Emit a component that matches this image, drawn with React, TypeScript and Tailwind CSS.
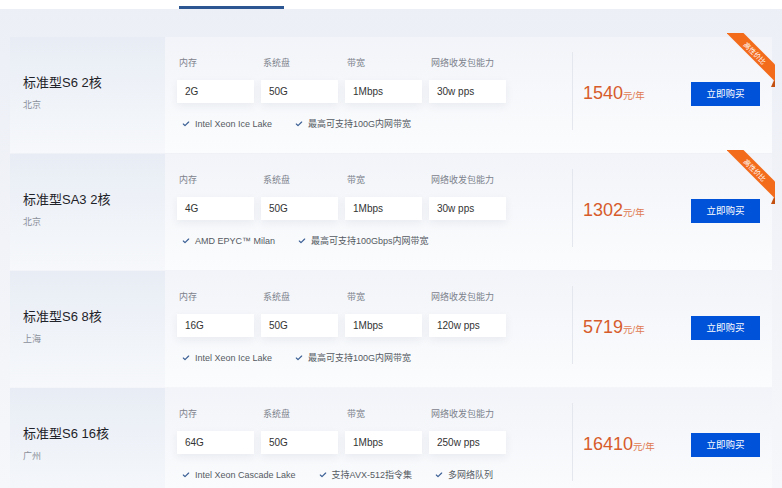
import { Check } from 'lucide-react'

type Plan = {
  name: string
  region: string
  specs: string[]
  features: string[]
  price: string
  hot?: boolean
}

const labels = ['内存', '系统盘', '带宽', '网络收发包能力']

const plans: Plan[] = [
  {
    name: '标准型S6 2核',
    region: '北京',
    specs: ['2G', '50G', '1Mbps', '30w pps'],
    features: ['Intel Xeon Ice Lake', '最高可支持100G内网带宽'],
    price: '1540',
    hot: true,
  },
  {
    name: '标准型SA3 2核',
    region: '北京',
    specs: ['4G', '50G', '1Mbps', '30w pps'],
    features: ['AMD EPYC™ Milan', '最高可支持100Gbps内网带宽'],
    price: '1302',
    hot: true,
  },
  {
    name: '标准型S6 8核',
    region: '上海',
    specs: ['16G', '50G', '1Mbps', '120w pps'],
    features: ['Intel Xeon Ice Lake', '最高可支持100G内网带宽'],
    price: '5719',
  },
  {
    name: '标准型S6 16核',
    region: '广州',
    specs: ['64G', '50G', '1Mbps', '250w pps'],
    features: ['Intel Xeon Cascade Lake', '支持AVX-512指令集', '多网络队列'],
    price: '16410',
  },
]

function Ribbon() {
  return (
    <div className="absolute right-[-3px] top-[-4px] w-[48px] h-[54px] overflow-hidden pointer-events-none">
      {/* folded end */}
      <div className="absolute right-0 bottom-0 w-0 h-0 border-l-[4px] border-l-transparent border-b-[9px] border-b-[#c4500f]" />
      <div className="absolute left-[-8px] top-[14px] w-[72px] h-[12px] rotate-45 bg-[#f36c1c] flex items-center justify-center">
        <span className="text-[7px] leading-none text-white">高性价比</span>
      </div>
    </div>
  )
}

function PlanCard({ plan }: { plan: Plan }) {
  return (
    <div className="relative flex h-[116px] w-[762px] bg-linear-to-b from-[#f2f4f9] to-[#fbfcfd]">
      {/* name + region */}
      <div className="w-[155px] flex flex-col pt-[36px] pl-[13px] bg-linear-to-b from-[#e8edf5] to-[#f6f8fb]">
        <div className="text-[13px] leading-[20px] text-[#1f2329]">{plan.name}</div>
        <div className="mt-[6px] text-[9px] leading-[12px] text-[#8a8f99]">{plan.region}</div>
      </div>

      {/* specs */}
      <div className="w-[407px] pl-[12px] pt-[20px]">
        <div className="flex gap-[7px]">
          {labels.map((l, i) => (
            <div key={l} className="w-[77px]">
              <div className="pl-[2px] text-[9px] leading-[12px] text-[#7d828c]">{l}</div>
              <div className="mt-[11px] h-[23px] flex items-center pl-[8px] bg-white shadow-[0_3px_8px_rgba(40,60,100,0.07)] text-[10px] text-[#333]">
                {plan.specs[i]}
              </div>
            </div>
          ))}
        </div>
        <div className="mt-[15px] pl-[5px] flex items-center gap-[23px]">
          {plan.features.map((f) => (
            <div key={f} className="flex items-center gap-[5px] text-[9px] leading-[12px] text-[#555a63]">
              <Check size={8} strokeWidth={3.5} className="text-[#3b5f95]" />
              <span>{f}</span>
            </div>
          ))}
        </div>
      </div>

      <div className="mt-[15px] h-[78px] w-px bg-[#e4e7ee]" />

      {/* price + buy */}
      <div className="flex-1 flex items-center justify-between pl-[10px] pr-[12px] pb-[2px]">
        <div className="flex items-baseline text-[#d75c2c]">
          <span className="text-[18px] leading-none">{plan.price}</span>
          <span className="text-[9.5px] text-[#e07a52]">元/年</span>
        </div>
        <button className="w-[69px] h-[24px] bg-[#0052d9] text-white text-[9.5px]">立即购买</button>
      </div>

      {plan.hot && <Ribbon />}
    </div>
  )
}

export default function App() {
  return (
    <div className="w-[782px] h-[488px] overflow-hidden bg-linear-to-b from-[#eceff6] to-[#f6f7fa] font-['Liberation_Sans','Noto_Sans_CJK_SC',sans-serif]">
      {/* tab bar bottom */}
      <div className="h-[9px] bg-white pl-[179px] pt-[6px]">
        <div className="w-[105px] h-[3px] bg-[#2c5692]" />
      </div>

      <div className="pt-[28px] pl-[10px] flex flex-col gap-px">
        {plans.map((p) => (
          <PlanCard key={p.name} plan={p} />
        ))}
      </div>
    </div>
  )
}
